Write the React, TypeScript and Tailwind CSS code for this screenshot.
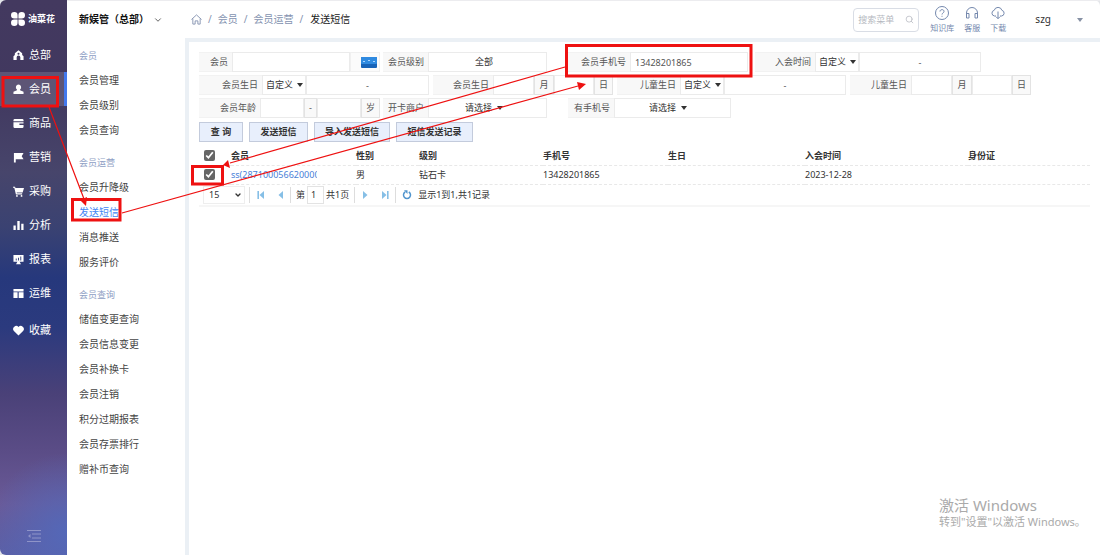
import { useState } from 'react'
import type { ReactNode } from 'react'
import { ChevronDown, Search } from 'lucide-react'

const railItems: { name: string; icon: ReactNode }[] = [
  { name: '总部', icon: <path fillRule="evenodd" d="M6 .3 10 3.500v2l1.500 1.300V11H8V8a2 2 0 0 0-4 0v3H.5V6.800L2 5.500v-2zM6 3a1.100 1.100 0 1 0 0 2.200A1.100 1.100 0 0 0 6 3z" /> },
  { name: '会员', icon: <path d="M6 .5a3 3 0 0 1 1.700 5.400v1L11.500 8.500V11H.5V8.500l3.800-1.600v-1A3 3 0 0 1 6 .5z" /> },
  { name: '商品', icon: <path d="M1.500 1h9l1 1v1.500H.5V2zM.5 4.500h11V6H7v1.500h4.500V10l-1 1h-9l-1-1z" /> },
  { name: '营销', icon: <path d="M1 1h10.500L9.500 4.500l2 3.500H3v3.500H1z" /> },
  { name: '采购', icon: <path d="M0 .8h2.200l.5 1.400H12L10.500 7H4l.3 1H10v1.200H3.200L1.400 2H0zM4.300 9.800a1 1 0 1 1 0 2 1 1 0 0 1 0-2zm5 0a1 1 0 1 1 0 2 1 1 0 0 1 0-2z" /> },
  { name: '分析', icon: <path d="M.5 6h2.500v5H.5zM4.700 1h2.600v10H4.700zM9 4h2.500v7H9z" /> },
  { name: '报表', icon: <path fillRule="evenodd" d="M.5 1h11v7.500H7.200l1.500 2.700H3.300l1.500-2.700H.5zM3 5v2h1V5zm2.500-1v3h1V4zM8 2.700V7h1V2.700z" /> },
  { name: '运维', icon: <path d="M.5 1h11v2.700H.5zM.5 4.700H5V11H.5zM6.200 4.700h5.300V11H6.200z" /> },
  { name: '收藏', icon: <path d="M6 11.500 1 6.500A3.100 3.100 0 0 1 6 2.300a3.100 3.100 0 0 1 5 4.200z" /> },
]

const menuGroups = [
  { title: '会员', items: ['会员管理', '会员级别', '会员查询'] },
  { title: '会员运营', items: ['会员升降级', '发送短信', '消息推送', '服务评价'] },
  { title: '会员查询', items: ['储值变更查询', '会员信息变更', '会员补换卡', '会员注销', '积分过期报表', '会员存票排行', '赠补币查询'] },
]

const headerLinks: { name: string; icon: ReactNode }[] = [
  { name: '知识库', icon: <path d="M7 .5a6.500 6.500 0 1 0 0 13 6.500 6.500 0 0 0 0-13zM5 5.500C5 3 9 3 9 5.400 9 7 7 7 7 8.500M7 9.800v1" /> },
  { name: '客服', icon: <path d="M1.500 12V7a5.500 5.500 0 0 1 11 0v5M1.500 7.500H4V12H1.500zM10 7.500h2.500V12H10z" /> },
  { name: '下载', icon: <path d="M5 10H3.500a2.900 2.900 0 0 1-.3-5.700 4 4 0 0 1 7.700 0 2.900 2.900 0 0 1-.4 5.700H9M7 5.500v7M5 10.700l2 2 2-2" /> },
]

const columns = [
  { title: '性别', width: 'w-[63px]' },
  { title: '级别', width: 'w-[124px]' },
  { title: '手机号', width: 'w-[125px]' },
  { title: '生日', width: 'w-[137px]' },
  { title: '入会时间', width: 'w-[163px]' },
  { title: '身份证', width: '' },
]

const box = 'h-5 border border-[#ebebeb] bg-white'

function Label({ text, width, htmlFor }: { text: string; width: string; htmlFor?: string }) {
  return (
    <label htmlFor={htmlFor} className={`${width} flex h-5 shrink-0 items-center justify-end border-y border-[#f2f2f2] bg-[#f8f8f8] pr-1`}>
      {text}
    </label>
  )
}

function Caret() {
  return <span className="h-0 w-0 border-x-[3px] border-t-[4px] border-x-transparent border-t-[#333]" />
}

function Picker({ id, label, value, width, pad, caret }: { id?: string; label: string; value: string; width: string; pad: string; caret?: string }) {
  return (
    <span className={`relative flex shrink-0 ${width}`}>
      <select id={id} aria-label={label} className={`${box} ${pad} w-full appearance-none text-[#333] outline-none`}>
        <option>{value}</option>
      </select>
      {caret && (
        <span className={`pointer-events-none absolute inset-y-0 flex items-center ${caret}`}>
          <Caret />
        </span>
      )}
    </span>
  )
}

function Unit({ text, width }: { text: string; width: string }) {
  return <span className={`${width} flex h-5 items-center justify-center border border-[#e3e3e3] bg-[#f9f9f9]`}>{text}</span>
}

function DateRange({ label, width }: { label: string; width: string }) {
  return <input aria-label={label} defaultValue="-" className={`${box} ${width} text-center outline-none`} />
}

function MonthDay({ label, width }: { label: string; width: string }) {
  return (
    <div className="flex">
      <Label text={label} width={width} />
      <input aria-label={`${label}月`} className={`${box} w-[41px] outline-none`} />
      <Unit text="月" width="w-5" />
      <input aria-label={`${label}日`} className={`${box} w-10 outline-none`} />
      <Unit text="日" width="w-[19px]" />
    </div>
  )
}

function Rail() {
  return (
    <nav className="flex w-[67px] shrink-0 flex-col rounded-l-md bg-[radial-gradient(circle_at_100%_96%,#5468b8,transparent_80px),linear-gradient(to_bottom,#43395f_0%,#41385f_16%,#47456b_31%,#3a4272_41%,#26387c_50%,#2b3a7e_59%,#4a4178_71%,#5a4c86_81%,#6a5a98_91%,#5a5fa6_100%)]">
      <div className="flex h-[38px] items-center gap-[3px] pl-[11px] text-[9px] font-bold text-white">
        <svg viewBox="0 0 14 14" className="h-[14px] w-[14px] fill-white">
          <path d="M3.300 0A3.300 3.300 0 0 1 6.600 3.300V6.600H3.300A3.300 3.300 0 0 1 3.300 0zM10.700 0a3.300 3.300 0 0 1 0 6.600H7.400V3.300A3.300 3.300 0 0 1 10.700 0zM3.300 7.400h3.300v3.300A3.300 3.300 0 1 1 3.300 7.400zM7.400 7.400h3.300a3.300 3.300 0 1 1-3.300 3.300z" />
        </svg>
        油菜花
      </div>
      {railItems.map((item) => (
        <a
          key={item.name}
          href="#"
          className={`flex h-[34px] items-center gap-[5px] pl-[13px] text-[11px] text-white last-of-type:mt-[3px] ${
            item.name === '会员' ? 'border-r-[3px] border-[#4379ee] bg-white/15' : ''
          }`}
        >
          <svg viewBox="0 0 12 12" className="h-[11px] w-[11px] fill-white">{item.icon}</svg>
          {item.name}
        </a>
      ))}
      <button aria-label="收起菜单" className="mx-auto mt-auto mb-3 text-[#8f94c8]">
        <svg viewBox="0 0 14 14" className="h-[14px] w-[14px]" fill="none" stroke="currentColor">
          <path d="M0 1.500h14M5 5h9M5 9h9M0 12.500h14" />
          <path d="M3.500 5v4L1 7z" fill="currentColor" stroke="none" />
        </svg>
      </button>
    </nav>
  )
}

function Header() {
  return (
    <header className="flex h-[38px] shrink-0 items-center border-t border-[#ececef] pr-[17px] pl-3 text-[10px]">
      <button className="flex items-center gap-1 font-bold text-[#111]">
        新娱管（总部）
        <ChevronDown className="h-[10px] w-[10px] text-[#444]" />
      </button>
      <nav className="ml-7 flex items-center gap-[6px] text-[#8493b0]">
        <a href="#" aria-label="首页">
          <svg viewBox="0 0 12 12" className="h-[11px] w-[11px]" fill="none" stroke="currentColor">
            <path d="M.5 6 6 1l5.500 5M2 5v6h2.500V7.500h3V11H10V5" />
          </svg>
        </a>
        <span>/</span>
        <a href="#">会员</a>
        <span>/</span>
        <a href="#">会员运营</a>
        <span>/</span>
        <span className="pl-px text-[#222]">发送短信</span>
      </nav>
      <div className="ml-auto flex h-6 w-[66px] items-center rounded border border-[#d9dde5] px-1">
        <input aria-label="搜索菜单" placeholder="搜索菜单" className="w-full min-w-0 text-[9px] outline-none placeholder:text-[#b5b8c0]" />
        <Search className="h-[9px] w-[9px] shrink-0 text-[#b5b8c0]" />
      </div>
      <div className="ml-[11px] flex gap-[10px] text-[8px] leading-[12px] text-[#7488ad]">
        {headerLinks.map(({ name, icon }) => (
          <a key={name} href="#" className="flex flex-col items-center gap-[2px] pt-px whitespace-nowrap">
            <svg viewBox="0 0 14 14" className="h-[14px] w-[14px]" fill="none" stroke="currentColor">{icon}</svg>
            {name}
          </a>
        ))}
      </div>
      <button className="ml-[29px] flex items-center gap-[26px] text-[#333]">
        szg
        <span className="h-0 w-0 border-x-[3px] border-t-[4px] border-x-transparent border-t-[#8791a5]" />
      </button>
    </header>
  )
}

function SideMenu() {
  return (
    <aside className="w-[118px] shrink-0 pt-[6px] pl-3 text-[10px] text-[#444]">
      {menuGroups.map((group) => (
        <section key={group.title} className="mb-2">
          <h2 className="flex h-6 items-center text-[9px] text-[#8e9ec4]">{group.title}</h2>
          {group.items.map((item) => (
            <a key={item} href="#" className={`flex h-[25px] items-center ${item === '发送短信' ? 'text-[#4285f4]' : ''}`}>
              {item}
            </a>
          ))}
        </section>
      ))}
    </aside>
  )
}

function Filters() {
  return (
    <form className="flex flex-col gap-[3px] text-[#555]" onSubmit={(e) => e.preventDefault()}>
      <div className="flex gap-[3px]">
        <div className="flex">
          <Label text="会员" width="w-[33px]" htmlFor="member" />
          <input id="member" className={`${box} w-[118px] outline-none`} />
          <button type="button" aria-label="读卡" className="flex h-5 w-[30px] items-center justify-center border border-[#f0f0f0] bg-[#fbfbfb] pl-2">
            <svg viewBox="0 0 16 11" className="h-[11px] w-4">
              <rect width="16" height="11" rx="1" fill="#1763b8" />
              <rect width="16" height="7" rx="1" fill="#2f8ae0" />
              <path d="M2 4.500h2M7 3.500h2M12 4.500h2" stroke="#a8d4ff" />
            </svg>
          </button>
        </div>
        <div className="mr-[18px] flex">
          <Label text="会员级别" width="w-[45px]" htmlFor="level" />
          <Picker id="level" label="会员级别" value="全部" width="w-[119px]" pad="pl-[46px]" />
        </div>
        <div className="mr-1 flex">
          <Label text="会员手机号" width="w-[62px]" htmlFor="phone" />
          <input id="phone" defaultValue="13428201865" className={`${box} w-[118px] pl-1 outline-none`} />
        </div>
        <div className="flex">
          <Label text="入会时间" width="w-[60px]" />
          <Picker label="入会时间类型" value="自定义" width="w-11" pad="pl-[3px]" caret="right-[3px]" />
          <DateRange label="入会时间" width="w-[122px]" />
        </div>
      </div>
      <div className="flex gap-1">
        <div className="flex">
          <Label text="会员生日" width="w-[63px]" />
          <Picker label="会员生日类型" value="自定义" width="w-11" pad="pl-[3px]" caret="right-[3px]" />
          <DateRange label="会员生日" width="w-[123px]" />
        </div>
        <MonthDay label="会员生日" width="w-[60px]" />
        <div className="flex">
          <Label text="儿童生日" width="w-[63px]" />
          <Picker label="儿童生日类型" value="自定义" width="w-11" pad="pl-[3px]" caret="right-[3px]" />
          <DateRange label="儿童生日" width="w-[122px]" />
        </div>
        <MonthDay label="儿童生日" width="w-[61px]" />
      </div>
      <div className="flex gap-[3px]">
        <div className="flex">
          <Label text="会员年龄" width="w-[61px]" htmlFor="age" />
          <input id="age" className={`${box} w-11 outline-none`} />
          <Unit text="-" width="w-[13px]" />
          <input aria-label="最大年龄" className={`${box} w-11 outline-none`} />
          <Unit text="岁" width="w-[19px]" />
        </div>
        <div className="mr-[18px] flex">
          <Label text="开卡商户" width="w-[45px]" htmlFor="shop" />
          <Picker id="shop" label="开卡商户" value="请选择" width="w-[119px]" pad="pl-9" caret="left-[69px]" />
        </div>
        <div className="flex">
          <Label text="有手机号" width="w-[46px]" htmlFor="has-phone" />
          <Picker id="has-phone" label="有手机号" value="请选择" width="w-[117px]" pad="pl-[34px]" caret="left-[67px]" />
        </div>
      </div>
      <div className="flex gap-[6px] pt-px">
        {[
          { name: '查 询', width: 'w-11' },
          { name: '发送短信', width: 'w-[59px]' },
          { name: '导入发送短信', width: 'w-[76px]' },
          { name: '短信发送记录', width: 'w-[77px]' },
        ].map((b) => (
          <button key={b.name} type="button" className={`${b.width} h-5 border border-[#c3cbdc] bg-[#e8effc] font-bold text-[#333]`}>
            {b.name}
          </button>
        ))}
      </div>
    </form>
  )
}

function MemberTable({ checked, onCheck }: { checked: boolean; onCheck: (v: boolean) => void }) {
  const checkbox = (label: string) => (
    <input
      type="checkbox"
      aria-label={label}
      checked={checked}
      onChange={(e) => onCheck(e.target.checked)}
      className="ml-[5px] block h-[11px] w-[11px] accent-[#666]"
    />
  )
  return (
    <table className="mt-1 w-full table-fixed text-left text-[#333]">
      <thead>
        <tr className="h-[19px] border-b border-dashed border-[#e8e8e8]">
          <th className="w-8">{checkbox('全选')}</th>
          <th className="w-[125px]">会员</th>
          {columns.map((c) => (
            <th key={c.title} className={c.width}>{c.title}</th>
          ))}
        </tr>
      </thead>
      <tbody>
        <tr className="h-[19px] border-b border-dashed border-[#e8e8e8]">
          <td>{checkbox('选择会员')}</td>
          <td>
            <a href="#" className="block w-[86px] overflow-hidden whitespace-nowrap text-[#4a7fd8]">ss(28710005662000001)</a>
          </td>
          <td>男</td>
          <td>钻石卡</td>
          <td>13428201865</td>
          <td />
          <td>2023-12-28</td>
          <td />
        </tr>
      </tbody>
    </table>
  )
}

function Arrow({ label, last, flip }: { label: string; last?: boolean; flip?: boolean }) {
  return (
    <button aria-label={label} className="flex w-[19px] justify-center">
      <svg viewBox="0 0 8 8" className={`h-2 w-2 fill-[#86bfe6] ${flip ? 'rotate-180' : ''}`}>
        <path d="M1 0 5.500 4 1 8z" />
        {last && <path d="M6 0h1.600v8H6z" />}
      </svg>
    </button>
  )
}

function Pager() {
  const divider = <span className="h-4 w-px bg-[#ddd]" />
  return (
    <div className="flex h-[22px] items-center border-b-2 border-[#f6f6f6] text-[#333]">
      <span className="relative ml-1 flex w-[42px]">
        <select aria-label="每页条数" className="h-[18px] w-full appearance-none border border-[#eee] bg-white pl-[5px] outline-none">
          <option>15</option>
        </select>
        <ChevronDown className="pointer-events-none absolute inset-y-0 right-[3px] my-auto h-2 w-2" strokeWidth={4} />
      </span>
      <div className="ml-1 flex items-center">
        {divider}
        <span className="flex px-px">
          <Arrow label="首页" last flip />
          <Arrow label="上一页" flip />
        </span>
        {divider}
      </div>
      <label className="ml-[5px] flex items-center gap-[2px]">
        第
        <input aria-label="页码" defaultValue="1" className="h-[18px] w-[17px] border border-[#e3e3e3] pl-[3px] outline-none" />
      </label>
      <span className="mr-[5px] ml-[2px]">共1页</span>
      {divider}
      <span className="flex px-px">
        <Arrow label="下一页" />
        <Arrow label="末页" last />
      </span>
      {divider}
      <button aria-label="刷新" className="mx-[6px]">
        <svg viewBox="0 0 10 10" className="h-[10px] w-[10px]" fill="none" stroke="#4f94cd" strokeWidth="1.500">
          <path d="M6.800 2A3.500 3.500 0 1 1 3.200 2" />
          <path d="M2 .3h3.500V4z" fill="#4f94cd" stroke="none" />
        </svg>
      </button>
      显示1到1,共1记录
    </div>
  )
}

// red guide boxes and arrows drawn over the page
function Guides() {
  return (
    <svg viewBox="0 0 1100 555" className="pointer-events-none absolute top-0 left-0 h-[555px] w-[1100px]" fill="none" stroke="#ee1111">
      <g strokeWidth="3">
        <path d="M3 77.500h54.500v28.500H3zM72.500 199.500h47.500v20.500H72.500zM192.500 166.500h30v17.500h-30zM566.500 45.500h184.500v30.500H566.500z" />
      </g>
      <path d="M49 107 84 199M122 213 578 86M565 67 230 163" strokeWidth="1.200" />
      <path d="M86 206l-6-6 7-3zM586 84l-7 6-2-8zM223 165l7 3-2-8z" fill="#ee1111" stroke="none" />
    </svg>
  )
}

export default function App() {
  const [checked, setChecked] = useState(true)

  return (
    <div className="relative flex min-h-screen bg-[#e4e6ea] font-['Noto_Sans','Noto_Sans_CJK_SC',sans-serif] text-[9px]">
      <Rail />
      <div className="flex min-w-0 flex-1 flex-col rounded-tr-md bg-white">
        <Header />
        <div className="flex flex-1">
          <SideMenu />
          <main className="min-w-0 flex-1 border-t-4 border-l-4 border-[#ebf0f5] px-[10px] pt-[10px]">
            <Filters />
            <MemberTable checked={checked} onCheck={setChecked} />
            <Pager />
          </main>
        </div>
      </div>
      <div className="pointer-events-none absolute right-4 bottom-[26px] w-[145px] whitespace-nowrap text-[#aaa]">
        <p className="text-[15px] leading-[18px]">激活 Windows</p>
        <p className="text-[11px] leading-[15px]">转到"设置"以激活 Windows。</p>
      </div>
      <Guides />
    </div>
  )
}
